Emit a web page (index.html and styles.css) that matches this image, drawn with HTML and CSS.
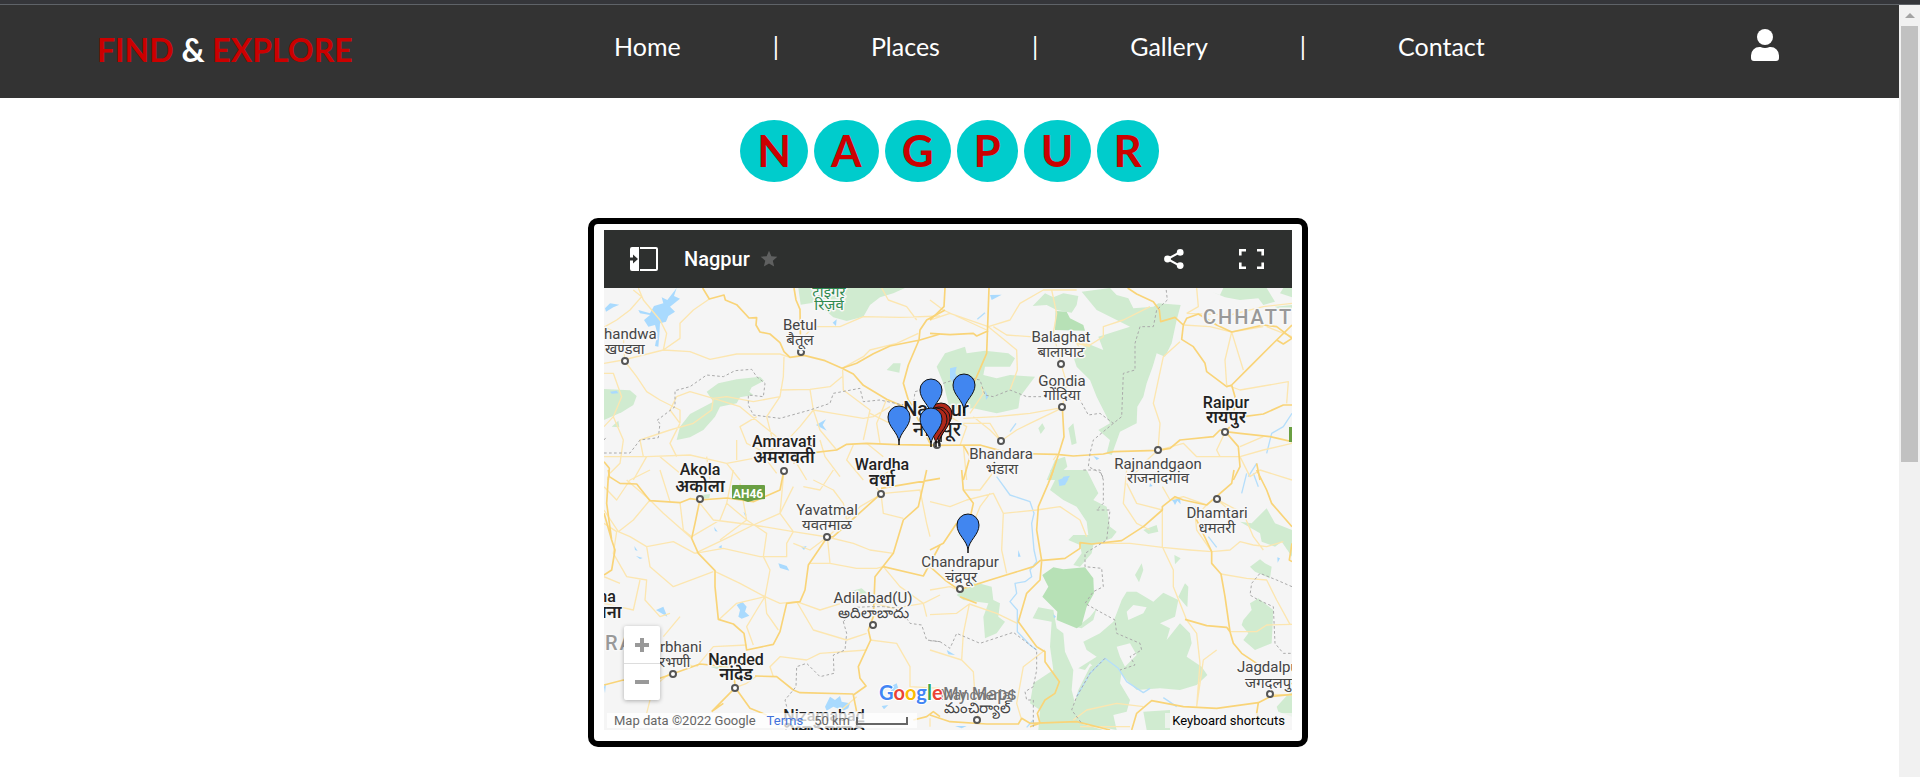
FILE: index.html
```html
<!DOCTYPE html>
<html lang="en">
<head>
<meta charset="utf-8">
<meta name="viewport" content="width=device-width, initial-scale=1">
<title>Find &amp; Explore - Nagpur</title>
<link rel="stylesheet" href="styles.css">
</head>
<body>
<div class="window-edge"></div>
<div class="viewport">
<div class="page">
  <header class="site-header">
    <a class="logo" href="#">FIND <span class="logo-amp">&amp;</span> EXPLORE</a>
    <nav class="site-nav">
      <a href="#">Home</a><span>|</span>
      <a href="#">Places</a><span>|</span>
      <a href="#">Gallery</a><span>|</span>
      <a href="#">Contact</a>
    </nav>
    <a class="account" href="#" aria-label="Account">
      <svg viewBox="0 0 28 32" width="28" height="32" fill="currentColor"><circle cx="14" cy="8" r="8"/><path d="M8.400 18H9.500a11 11 0 0 0 9 0h1.100A8.400 8.400 0 0 1 28 26.400V29a3 3 0 0 1-3 3H3a3 3 0 0 1-3-3v-2.600A8.400 8.400 0 0 1 8.400 18z"/></svg>
    </a>
  </header>

  <main>
    <h1 class="city"><span>N</span><span>A</span><span>G</span><span>P</span><span>U</span><span>R</span></h1>

    <div class="map-row">
    <section class="map-frame">
      <div class="map-bar">
        <button class="icon-button" aria-label="Show panel">
          <svg viewBox="0 0 28 24" width="28" height="24"><path fill="#fff" fill-rule="evenodd" d="M2 0h7v24H2a2 2 0 0 1-2-2V13.500h3v3L8 12 3 7.500v3H0V2a2 2 0 0 1 2-2zM10 0h16a2 2 0 0 1 2 2v20a2 2 0 0 1-2 2H10v-2h16V2H10z"/></svg>
        </button>
        <h2 class="map-title">Nagpur</h2>
        <button class="icon-button star" aria-label="Star this map">
          <svg viewBox="0 0 24 24" width="20" height="20" fill="#5f6060"><path d="M12 17.300 18.200 21l-1.600-7L22 9.200l-7.200-.6L12 2 9.200 8.600 2 9.200 7.500 14l-1.700 7z"/></svg>
        </button>
        <button class="icon-button share" aria-label="Share">
          <svg viewBox="0 0 20 20" width="20" height="20" fill="#fff"><path d="M3.500 10 16 3.200M3.500 10 16 16.800" stroke="#fff" stroke-width="2"/><circle cx="3.500" cy="10" r="3.400"/><circle cx="16.200" cy="3.400" r="3.400"/><circle cx="16.200" cy="16.600" r="3.400"/></svg>
        </button>
        <button class="icon-button" aria-label="Full screen">
          <svg viewBox="0 0 25 20" width="25" height="20" fill="none" stroke="#fff" stroke-width="2.600"><path d="M1.300 6.500V1.300H7M18 1.300h5.700v5.200M23.700 13.500v5.200H18M7 18.700H1.300v-5.200"/></svg>
        </button>
      </div>

      <div class="map">
        <svg class="map-art" viewBox="0 0 688 442" preserveAspectRatio="xMidYMid slice" role="img" aria-label="Map of Nagpur and its surroundings">
          <svg x="0" y="0" width="688" height="442" viewBox="0 0 2064 1326">
            <!-- forests -->
            <g class="forest" transform="translate(-72 -234)">
              <path d="M655 234H975L940 250 900 262 870 285 850 320 800 333 760 322 735 300 700 278 662 284z"/>
              <path d="M380 545 415 520 470 508 540 500 552 512 515 532 508 545 520 555 480 562 470 580 420 590 405 620 370 660 330 682 290 690 300 650 330 612 400 575z"/>
              <path d="M72 537 150 541 170 558 160 585 125 607 72 630z"/>
              <path d="M920 480 940 460 962 460 958 488zM95 650 115 632 118 652z"/>
            </g>
            <g class="forest" transform="translate(978 -234)">
              <path d="M308 288 345 250 370 262 400 250 445 258 440 285 425 308 380 300 350 285z"/>
              <path d="M455 245 540 234 560 255 595 265 610 295 670 290 685 280 752 285 740 330 725 400 705 440 680 430 668 470 650 520 640 560 622 590 620 640 570 665 545 735 530 730 540 690 505 660 540 640 500 560 480 510 440 470 430 440 470 400 520 420 505 380 600 350 560 330 500 300z"/>
              <path d="M20 470 45 430 105 410 110 430 165 422 235 430 255 445 240 470 165 470 160 495 200 505 240 495 315 500 270 560 265 595 200 610 130 595 60 600 40 520z"/>
              <path d="M845 245 870 255 880 234H1010L1035 275 1000 285 985 265 930 270 885 262zM1060 234H1086V262L1050 250zM1035 290 1086 285V300L1050 305z"/>
              <path d="M415 655 430 640 440 700 425 705zM325 655 337 640 345 655 332 672zM375 750 405 740 412 770 390 790 415 810H350z"/>
              <path class="forest-deep" d="M377 303 410 305 420 325 460 345 465 362 375 360z"/>
            </g>
            <g class="forest" transform="translate(-72 546)">
              <path d="M365 75 390 72 388 85 365 88zM805 365 845 355 862 370 820 375zM390 590 440 590 420 600z"/>
            </g>
            <g class="forest" transform="translate(978 546)">
              <path d="M360 0 470 0 505 70 490 90 530 110 540 170 560 185 545 205 490 225 485 250 450 290 430 285 455 250 450 225 415 210 430 195 475 195 470 155 440 110 400 90 360 60 375 30z"/>
              <path d="M80 375 130 335 185 350 190 390 210 400 205 440 225 455 200 490 165 505 160 440 175 400 100 390zM640 180 680 165 685 185 655 192zM615 315 635 280 640 300 627 337zM733 255 752 265 735 283z"/>
              <path d="M308 445 325 412 370 420 380 475 400 490 405 545 430 600 425 660 435 700 450 760 520 780 H325L330 720 300 700 310 640 370 600 360 530 365 455z"/>
              <path d="M575 390 590 365 620 365 670 395 700 368 745 390 735 440 690 460 720 475 710 510 750 460 780 490 785 520 770 560 815 590 832 615 800 645 750 660 690 655 620 660 590 630 565 600 530 570 500 600 480 580 465 600 445 595 500 560 470 540 460 515 510 490 550 455 560 430z"/>
              <path d="M480 590 525 565 575 605 570 640 600 690 590 725 550 735 560 780 450 760 425 730 445 660zM500 415 490 450 455 475 440 472 480 440zM745 380 765 340 775 350 772 412z"/>
              <path d="M930 155 965 160 1010 115 1035 160 1086 180V260L1055 215 1035 230 995 215 990 190zM960 290 990 268 1005 280 1025 290 1020 325 975 305zM940 450 965 420 960 400 985 385 1030 420 1025 520 975 540 940 510 955 490 935 465zM1040 710 1086 660V740L1045 725zM640 725 720 720 720 780 650 780z"/>
              <path class="forest-deep" d="M337 315 370 292 400 298 465 292 490 325 492 370 470 410 455 465 440 475 380 450 382 425 337 380 355 350z"/>
              <path class="clearing" d="M590 425 610 405 650 412 640 430 595 450zM560 530 600 520 620 555 585 590 570 560zM430 550 460 530 440 590z"/>
            </g>
            <!-- water -->
            <g class="water" transform="translate(-72 -234)">
              <path d="M175 300 210 310 222 288 250 280 245 262 262 270 290 234 282 258 300 266 270 290 285 305 265 318 258 335 240 340 238 375 235 410 225 408 232 370 225 345 205 350 192 330 210 315 180 310zM75 295 90 280 118 284 100 292 78 305zM90 545 110 542 115 550 95 551zM708 645 738 628 728 645 740 662zM758 338 770 328 768 348z"/>
            </g>
            <g class="water" transform="translate(978 -234)">
              <path d="M180 255 215 254 185 270zM60 475 80 470 76 490 85 505 70 520 60 505zM165 540 175 560 168 570zM490 738 508 745 500 750zM400 800 420 797 412 810H395z"/>
            </g>
            <g class="water" transform="translate(-72 546)">
              <path d="M595 280 620 288 628 302 600 294zM470 405 487 395 500 410 495 425 508 437 485 446 475 440 480 420zM228 420 250 410 262 440zM163 228 173 243 165 240zM168 258 188 264 180 267zM402 170 413 185 405 183zM415 232 425 225 425 235zM664 232 680 228 672 240zM490 125 500 135 495 137zM735 710 750 680 765 690 780 678 785 695 810 700 805 715 790 722 760 710 740 722zM905 708 925 705 912 718zM930 650 950 640 955 655 935 668zM72 650 78 640 75 670z"/>
            </g>
            <g class="water" transform="translate(978 546)">
              <path d="M385 30 410 20 415 28 405 45 388 48zM725 90 750 85 752 103 742 92 735 105 730 95zM265 240 272 260 264 260zM1042 262 1050 265 1043 278zM660 40 668 48 658 50zM50 540 75 555 55 553zM370 433 378 440 372 445zM75 768 110 768 95 775z"/>
            </g>
            <g class="rivers">
              <path transform="translate(978 -234)" d="M142 328 165 308M240 665 258 640M1086 610 1060 650 1025 670 1010 730M980 760 955 800"/>
              <path transform="translate(978 546)" d="M200 20 240 75 300 95 312 130 305 160 312 240 320 275 300 300 305 320 285 335 255 340 260 370 240 395 262 420 262 485 300 525 320 540M440 680 480 610 525 565 565 595 590 635 640 668 660 655M835 200 860 232M950 10 935 70M970 10 985 50M700 683 740 710M310 750 290 772"/>
            </g>
            <!-- minor roads -->
            <g class="roads-minor">
              <path transform="translate(-72 -234)" d="M72 460 130 450 250 420 330 425 390 448 470 432 600 432 630 442M250 420 300 385 300 340 340 300 388 267M160 240 185 260 150 300 110 330 75 350M72 490 100 490 125 560 100 620 72 650M134 453 170 500 200 545 240 570 300 600 300 640M175 234 190 270 240 330 260 370 250 420M612 440 610 500 600 560 560 620 575 680 613 700M600 540 690 538 750 530 786 500M788 480 790 540 870 600 850 690M400 565 395 600 340 640 270 660 180 690 190 740M400 565 330 545 290 560 270 600 300 640M400 565 480 590 540 640 590 680 613 700M400 565 440 560 520 575 600 560M700 350 780 350 850 320 960 322 1080 318M663 390 700 350M905 234 925 270 980 290 1010 330M786 475 850 440 870 420 950 400 1015 370M700 600 760 610 850 625 880 620 930 590M613 700 660 650 700 600 690 538M72 740 200 740 330 735 440 760 520 745 613 700M200 740 160 810M240 740 300 790M440 760 480 810M530 620 480 650 500 700 540 720M720 690 735 740 780 800M820 705 800 750 850 810M300 640 270 700 290 740M470 690 470 750M770 720 720 660 700 600M920 568 890 640 900 700M870 610 930 640M545 730 590 790M650 760 680 810M380 740 390 810M100 620 130 690 120 760 90 790M860 700 910 740M72 350 130 380 134 450"/>
              <path transform="translate(978 -234)" d="M0 270 40 300 170 360M175 350 240 330 270 280 340 240 440 240M365 240 380 310 370 370 393 461M190 350 230 375 370 385 480 405 520 380 520 350 580 330 660 290M0 330 60 310 175 350 230 395 260 420 262 480 240 540M100 625 200 620 300 610 400 592M393 461 410 520 397 592M800 234 805 290 770 310M905 366 940 480M905 366 885 450 890 525M760 345 840 350 905 366 1000 350M770 310 900 315 1000 290 1086 280M750 395 700 440 670 580 690 640 684 721M100 640 180 640 213 693 260 660 300 640 400 592M213 693 180 660 130 620M60 620 110 650 90 706M684 721 640 760 600 810M684 721 760 700 800 740 870 740 930 740 1000 720 1086 700M890 525 930 540 1075 515 1070 580M886 665 860 720 870 740M930 740 960 800 990 780 1086 810M930 710 1000 680M100 706 110 810M460 430 440 400 480 410M370 750 380 735M1010 350 1086 380M120 610 160 550 155 530"/>
              <path transform="translate(-72 546)" d="M72 50 110 90 150 30 210 0M210 90 160 150 115 185 72 120M115 185 150 200 200 230 210 290 280 350 400 305M72 160 110 185 100 250 140 320 200 330 195 390 240 440 270 430M200 230 280 215 345 250M210 90 250 130 335 205M270 95 240 0M300 98 310 180 335 200 420 150 440 100 460 0M360 100 400 150 520 165 600 130 612 0M440 100 500 150 560 190 550 260 570 300 555 380 600 400 650 395M345 250 450 200 520 165 640 185 742 201M345 250 430 235 540 260 620 260 620 220 640 185M406 305 480 340 555 380 470 400 418 448M555 380 530 420 500 470 520 525M555 380 560 430 595 480M742 201 750 280 830 295 890 295 910 290M742 201 800 150 790 100 760 60 700 30M742 201 820 220 870 240 940 250M742 201 690 240 640 220M690 280 750 280M900 75 840 110 800 150M903 71 1020 60 1040 160 1050 200M903 71 910 130 970 145M650 395 720 420 800 395 830 370 880 380M650 395 700 480 800 510 860 490M870 510 950 520 990 590 990 650 1080 655M720 550 680 570 600 560 570 590 580 620M720 550 860 540M1080 375 1030 400 940 415 885 400M910 290 960 350 1030 400 1040 440M72 400 160 420 180 330M72 320 120 340M270 610 220 650 200 730M340 590 300 570M500 525 400 530 350 590M466 653 500 640 530 618M830 680 760 740 700 750M480 40 500 150 420 210M670 50 720 60 760 0M640 50 600 130 640 185M140 30 210 90M300 440 250 500M930 0 880 40 903 71"/>
              <path transform="translate(978 546)" d="M0 95 60 110 110 90 190 70 220 130 320 120 390 110 450 150 470 200M180 70 150 110 130 160M220 130 215 240 230 310M0 434 80 430 118 402 200 430 262 460M90 362 60 350 0 360M118 402 100 490 95 570 130 605 135 680 145 751M95 570 0 540M100 60 150 60 195 0M590 0 580 100 620 160 660 180M697 120 697 230 730 300 730 350 750 400 770 450M500 220 600 220 697 232 780 240 845 245 900 240 930 215 970 225 1010 230 1060 215M796 140 800 180 845 245M796 140 830 105M770 450 800 490 810 580 800 710M900 485 980 485 1010 465 1086 463M873 312 950 325 1010 330 1040 390 1080 463M800 710 820 570 860 540M860 88 940 130 970 200 1000 240M860 88 910 130M697 120 620 100 590 40M697 50 720 90 760 80 830 105M1020 673 1086 675M640 710 560 700 470 720 430 750M0 745 0 770M450 770 600 770M345 540 280 590 260 700 275 750"/>
            </g>
            <!-- major roads -->
            <g class="roads-major">
              <path transform="translate(-72 -234)" d="M368 234 388 267 432 255 436 270 470 284 507 324 530 323 528 345 540 366 570 372 600 398 612 425 630 442 672 436 735 452 786 475 820 492 850 526 920 568 955 583 1000 600 1050 700M786 475 830 460 880 431 930 408 1020 390 1080 372M642 234 648 270 660 298 662 420 M1095 300 1040 330 1020 360 1017 390 985 465 970 520 985 570 1020 620M640 760 700 728 770 720 800 703 860 700 950 704 1080 706M72 755 88 775 85 810"/>
              <path transform="translate(978 -234)" d="M45 234 42 290 0 330M177 234 170 430 140 500 100 580M0 370 60 374 130 370 140 378 175 362M593 234 620 252 670 275 688 300 692 335 735 322 760 345 755 388 790 410 825 460 830 485 890 530 905 525 960 470 1040 390 1086 345M760 345 770 325 805 312 860 345 905 366 1000 345 1040 350 1086 385M1040 390 1060 402 1086 385M397 592 402 680 385 735 360 810M0 706 150 705 240 730 380 733 430 738 520 732 550 725 684 721 720 715 750 690 850 680 870 660 886 665 930 670 1020 680 1086 695M886 665 910 640 915 560 905 525M940 620 1000 612 1060 585 1086 585M886 665 925 710 930 770 910 810M980 760 990 810M100 810 120 740 100 706"/>
              <path transform="translate(-72 546)" d="M85 0 88 20 120 40 170 42 210 92 300 98 330 86 360 90 440 84 520 95 600 60 612 0M72 130 95 210 105 240 95 300 72 315M85 20 80 100 95 210M360 88 345 160 335 205 355 250 405 302 405 350 415 448 460 462 492 490 500 540 580 523 600 485 620 400 660 395 675 360 685 285 742 201 760 200 903 71M903 55 1080 25M1040 0 1015 110 970 150 940 250 885 320 880 440 865 480 872 510 835 590 840 625 858 648 820 675 825 700 830 725M910 290 1030 318 1080 225M279 611 360 582 440 590 460 605M72 645 130 630 180 645 279 611M430 700 395 725M460 605 466 653 395 725M466 653 510 715 560 735M525 618 590 620 640 660 660 668 820 672M1000 750 1040 740 1060 725 1080 740M580 523 500 540"/>
              <path transform="translate(978 546)" d="M95 0 100 60 130 100 120 145 80 160 40 220 0 240M370 0 355 40 325 110 320 180 335 272 330 330 290 370 265 455 320 530 345 545 345 575 388 635 375 670 345 690 322 730 330 760 300 770M80 362 180 330 310 290 330 272 405 265 450 235 450 218 485 222 575 212 640 170 697 120 697 110 735 80 760 90 830 105 905 40 912 0M0 290 45 330 90 362M90 380 140 400M980 0 1010 60 1025 100 1086 170M796 110 800 150 845 245 845 280 873 312 885 380 900 485 910 520 935 550 980 580M765 448 830 467 890 472 900 485M1086 220 1078 270 1086 275M1086 673 1020 680 985 698 860 715 760 710 665 692 620 730 605 780M985 698 980 730 1000 770M0 735 60 755 170 762 265 762 275 745 300 760 440 755 540 780"/>
            </g>
            <!-- state borders -->
            <g class="borders">
              <path transform="translate(-72 -234)" d="M72 690 80 680M72 729 150 729 180 690 235 683 240 640 230 632 285 590 285 542 330 530 380 495 430 500 465 482 515 478 530 500 555 520 550 560 505 555 505 585 520 615 600 625 690 600 750 580 760 550 840 535 850 575 900 570 960 583 1000 585 1005 545 1060 530"/>
              <path transform="translate(978 -234)" d="M40 520 100 500 150 510 165 555 190 560 240 540 290 560 340 560 450 570 475 615 510 610 550 640 575 620 580 490 615 480 615 400 630 350 670 350 680 300 712 270 708 234M550 640 520 665 490 690 480 730 475 770 515 790 520 810"/>
              <path transform="translate(-72 546)" d="M790 455 800 490 795 540 760 555 762 610 720 620 680 580 650 590 648 650 615 690 625 730M790 455 830 412 870 410 910 410 960 415 990 460 1025 465 1040 510 1080 515"/>
              <path transform="translate(978 546)" d="M0 512 30 515 60 535 80 490 150 520 250 487 320 540 320 600 310 650 285 665 290 690 310 690 310 770M460 0 510 0 520 30 520 100 500 120 540 120 530 210 465 250 465 290 515 295 520 350 490 365 465 400 500 420 555 450 560 490 630 520 635 540 600 560 615 585 570 600M525 565 480 610 440 680 425 720 455 760M1086 350 1040 330 990 310 965 340 960 375 985 390 1030 410 1035 520 1060 550 1086 550"/>
            </g>
          </svg>

          <g class="towns">
            <circle cx="21" cy="73" r="3"/><circle cx="197" cy="64" r="3"/><circle cx="180" cy="183" r="3"/><circle cx="96" cy="211" r="3"/><circle cx="277" cy="206" r="3"/><circle cx="223" cy="249" r="3"/><circle cx="356" cy="301" r="3"/><circle cx="269" cy="337" r="3"/><circle cx="69" cy="386" r="3"/><circle cx="131" cy="400" r="3"/><circle cx="373" cy="432" r="3"/><circle cx="457" cy="76" r="3"/><circle cx="458" cy="119" r="3"/><circle cx="621" cy="144" r="3"/><circle cx="554" cy="162" r="3"/><circle cx="397" cy="153" r="3"/><circle cx="613" cy="211" r="3"/><circle cx="666" cy="406" r="3"/><circle cx="333" cy="157" r="3"/>
          </g>

          <g class="label region"><text x="599" y="36">CHHATT</text><text x="1" y="362">RA</text></g>
          <g class="label park"><text x="225" y="9">टाइगर</text><text x="225" y="22">रिज़र्व</text></g>
          <g class="label start">
            <text x="0" y="51">handwa</text><text x="1" y="66" class="local">खण्डवा</text>
            <text x="56" y="364">rbhani</text><text x="55" y="379" class="local">रभणी</text>
            <text x="633" y="384">Jagdalpur</text><text x="641" y="400" class="local">जगदलपुर</text>
          </g>
          <g class="label">
            <text x="196" y="42">Betul</text><text x="196" y="57" class="local">बैतूल</text>
            <text x="223" y="227">Yavatmal</text><text x="223" y="242" class="local">यवतमाळ</text>
            <text x="356" y="279">Chandrapur</text><text x="357" y="294" class="local">चंद्रपूर</text>
            <text x="269" y="315">Adilabad(U)</text><text x="269" y="330" class="local">అదిలాబాదు</text>
            <text x="457" y="54">Balaghat</text><text x="457" y="69" class="local">बालाघाट</text>
            <text x="458" y="98">Gondia</text><text x="458" y="112" class="local">गोंदिया</text>
            <text x="554" y="181">Rajnandgaon</text><text x="554" y="195" class="local">राजनांदगांव</text>
            <text x="397" y="171">Bhandara</text><text x="398" y="186" class="local">भंडारा</text>
            <text x="613" y="230">Dhamtari</text><text x="613" y="245" class="local">धमतरी</text>
            <text x="373" y="412" class="muted">Mancherial</text><text x="373" y="425" class="local">మంచిర్యాల్</text>
          </g>
          <g class="label big">
            <text x="180" y="159">Amravati</text><text x="180" y="175" class="local">अमरावती</text>
            <text x="96" y="187">Akola</text><text x="96" y="204" class="local">अकोला</text>
            <text x="278" y="182">Wardha</text><text x="278" y="198" class="local">वर्धा</text>
            <text x="132" y="377">Nanded</text><text x="132" y="392" class="local">नांदेड</text>
            <text x="220" y="433">Nizamabad</text><text x="220" y="447" class="local">నిజామాబాద్</text>
            <text x="622" y="120">Raipur</text><text x="622" y="135" class="local">रायपुर</text>
            <text x="3" y="314">na</text><text x="4" y="330" class="local">लना</text>
            <text x="332" y="128" class="capital">Nagpur</text><text x="333" y="148" class="capital">नागपूर</text>
          </g>

          <path d="M129 197h31a1 1 0 0 1 1 1v13l-10 1-7 2-6-2-9-1a1 1 0 0 1-1-1v-12a1 1 0 0 1 1-1z" fill="#6a9f43"/>
          <text class="shield" x="144" y="210">AH46</text>
          <path d="M685 139h3v15h-3z" fill="#6a9f43"/>

          <defs><path id="pin" d="M0 28V25C-1 15-11 10-11 0a11 11 0 0 1 22 0C11 10 1 15 0 25z"/></defs>
          <g class="pin red"><use href="#pin" x="337" y="126"/><use href="#pin" x="335" y="130"/><use href="#pin" x="332" y="131"/></g>
          <g class="pin blue"><use href="#pin" x="327" y="102"/><use href="#pin" x="360" y="97"/><use href="#pin" x="295" y="129"/><use href="#pin" x="327" y="131"/><use href="#pin" x="364" y="237"/></g>

          <text class="brand" x="275" y="412"><tspan fill="#4285f4">G</tspan><tspan fill="#ea4335">o</tspan><tspan fill="#fbbc05">o</tspan><tspan fill="#4285f4">g</tspan><tspan fill="#34a853">l</tspan><tspan fill="#ea4335">e</tspan></text>
          <text class="product" x="339" y="412">My Maps</text>
        </svg>

        <div class="zoom"><button aria-label="Zoom in"><svg viewBox="0 0 14 14" width="14" height="14"><path d="M5 0h4v5h5v4H9v5H5V9H0V5h5z" fill="#999"/></svg></button><button aria-label="Zoom out"><svg viewBox="0 0 14 14" width="14" height="14"><path d="M0 5h14v4H0z" fill="#999"/></svg></button></div>
        <div class="credits"><span>Map data ©2022 Google</span><a href="#">Terms</a><span class="scale">50 km<i></i></span></div>
        <button class="shortcuts">Keyboard shortcuts</button>
      </div>
    </section>
    </div>
  </main>
</div>
<div class="scrollbar" aria-hidden="true"><div class="scroll-arrow"></div><div class="scroll-thumb"></div></div>
</div>
</body>
</html>
```
FILE: styles.css
```css
* { box-sizing: border-box; }
body {
  margin: 0;
  height: 100vh;
  display: flex;
  flex-direction: column;
  overflow: hidden;
  background: #fff;
  font-family: Lato, "Open Sans", sans-serif;
}
a { text-decoration: none; color: inherit; }
button { border: 0; padding: 0; background: none; font: inherit; cursor: pointer; }
svg { display: block; }

.window-edge { flex: none; height: 5px; background: #35363a; border-bottom: 1px solid #5f6368; }
.viewport { flex: 1; display: flex; min-height: 0; }
.page { flex: 1; min-width: 0; overflow: hidden; }

.scrollbar { flex: none; width: 21px; padding: 0 2px; background: #f1f1f1; }
.scroll-arrow { height: 21px; display: grid; place-items: center; }
.scroll-arrow::before {
  content: "";
  border: 5px solid transparent;
  border-top: 0;
  border-bottom-color: #a3a3a3;
}
.scroll-thumb { height: 436px; background: #c1c1c1; }

.site-header {
  display: grid;
  grid-template-columns: 517fr 1137fr 51fr;
  align-items: start;
  padding: 24px 97px 0;
  min-height: 93px;
  background: #333;
  color: #fff;
}
.logo { font-size: 32px; line-height: 42px; font-weight: 700; color: #c00; white-space: nowrap; }
.logo-amp { color: #fff; }
.site-nav { display: flex; gap: 92px; font-size: 25px; line-height: 34px; }
.account { color: #fff; }

.city {
  display: flex;
  justify-content: center;
  gap: 6px;
  margin: 22px 0 36px;
  font-size: 44px;
  line-height: 60px;
  font-weight: 700;
  color: #c00;
}
.city span { padding: 0 17px 2px; border-radius: 50%; background: #0cc; }

.map-row { display: flex; justify-content: center; padding-right: 3px; }
.map-frame {
  width: 720px;
  max-width: 100%;
  padding: 6px 10px 11px;
  border: 6px solid #000;
  border-radius: 10px;
  font-family: Roboto, "Noto Sans", sans-serif;
}
.map-bar { display: flex; align-items: center; height: 58px; padding: 0 28px 0 26px; background: #2e302f; color: #fff; }
.map-title { margin: 0 9px 0 26px; font-size: 20px; line-height: 24px; font-weight: 500; }
.share { margin: 0 55px 0 auto; }

.map { position: relative; height: 442px; overflow: hidden; background: #f5f5f5; }
.map-art { width: 100%; height: 100%; }
.forest { fill: #d0ebd0; }
.forest-deep { fill: #b7e1b6; }
.clearing { fill: #f5f5f5; }
.water { fill: #a9dafe; }
.rivers, .roads-minor, .roads-major, .borders { fill: none; stroke-linejoin: round; }
.rivers { stroke: #b5defb; stroke-width: 4; }
.roads-minor { stroke: #fce6b0; stroke-width: 4; }
.roads-major { stroke: #f9d478; stroke-width: 5; }
.borders { stroke: #aaa; stroke-width: 3; stroke-dasharray: 8 7; }
.towns { fill: #fff; stroke: #555; stroke-width: 2; }

.label { font-size: 15px; fill: #444; stroke: #f8f8f8; stroke-width: 3px; paint-order: stroke; stroke-linejoin: round; text-anchor: middle; }
.label .local { font-size: 15px; }
.label.start, .label.region { text-anchor: start; }
.label.big { font-size: 16px; font-weight: 500; fill: #222; }
.label.big .local { font-size: 17px; font-weight: 600; }
.label.big .capital { font-size: 20px; }
.label.region { font-size: 20px; font-weight: 500; letter-spacing: 2px; fill: #999; }
.label.park { font-size: 15px; fill: #2f8a50; }
.label .muted { fill: #777; }
.shield { font-size: 12px; font-weight: 700; fill: #fff; text-anchor: middle; }
.pin { stroke: #111; stroke-width: 1; }
.pin.red { fill: #b0281a; }
.pin.blue { fill: #4186f0; }
.brand { font-family: Lato, sans-serif; font-size: 20px; font-weight: 700; stroke: #fff; stroke-width: 2px; paint-order: stroke; }
.product { font-size: 18px; fill: #757575; }

.zoom {
  position: absolute;
  left: 20px;
  bottom: 30px;
  width: 36px;
  border-radius: 2px;
  background: #fff;
  box-shadow: 0 1px 4px rgba(0, 0, 0, .3);
}
.zoom button { display: grid; place-items: center; width: 100%; height: 37px; }
.zoom button + button { border-top: 1px solid #ddd; }
.credits {
  position: absolute;
  left: 3px;
  bottom: 2px;
  display: flex;
  gap: 11px;
  padding: 0 9px 0 7px;
  background: rgba(255, 255, 255, .75);
  font-size: 13px;
  line-height: 15px;
  color: #666;
}
.credits a { color: #4272db; }
.scale { display: flex; align-items: center; gap: 6px; }
.scale i { width: 52px; height: 8px; border: 2px solid #666; border-top: 0; }
.shortcuts {
  position: absolute;
  right: 0;
  bottom: 2px;
  padding: 0 7px;
  background: rgba(245, 245, 245, .75);
  font-size: 13px;
  line-height: 15px;
  color: #000;
}
```
